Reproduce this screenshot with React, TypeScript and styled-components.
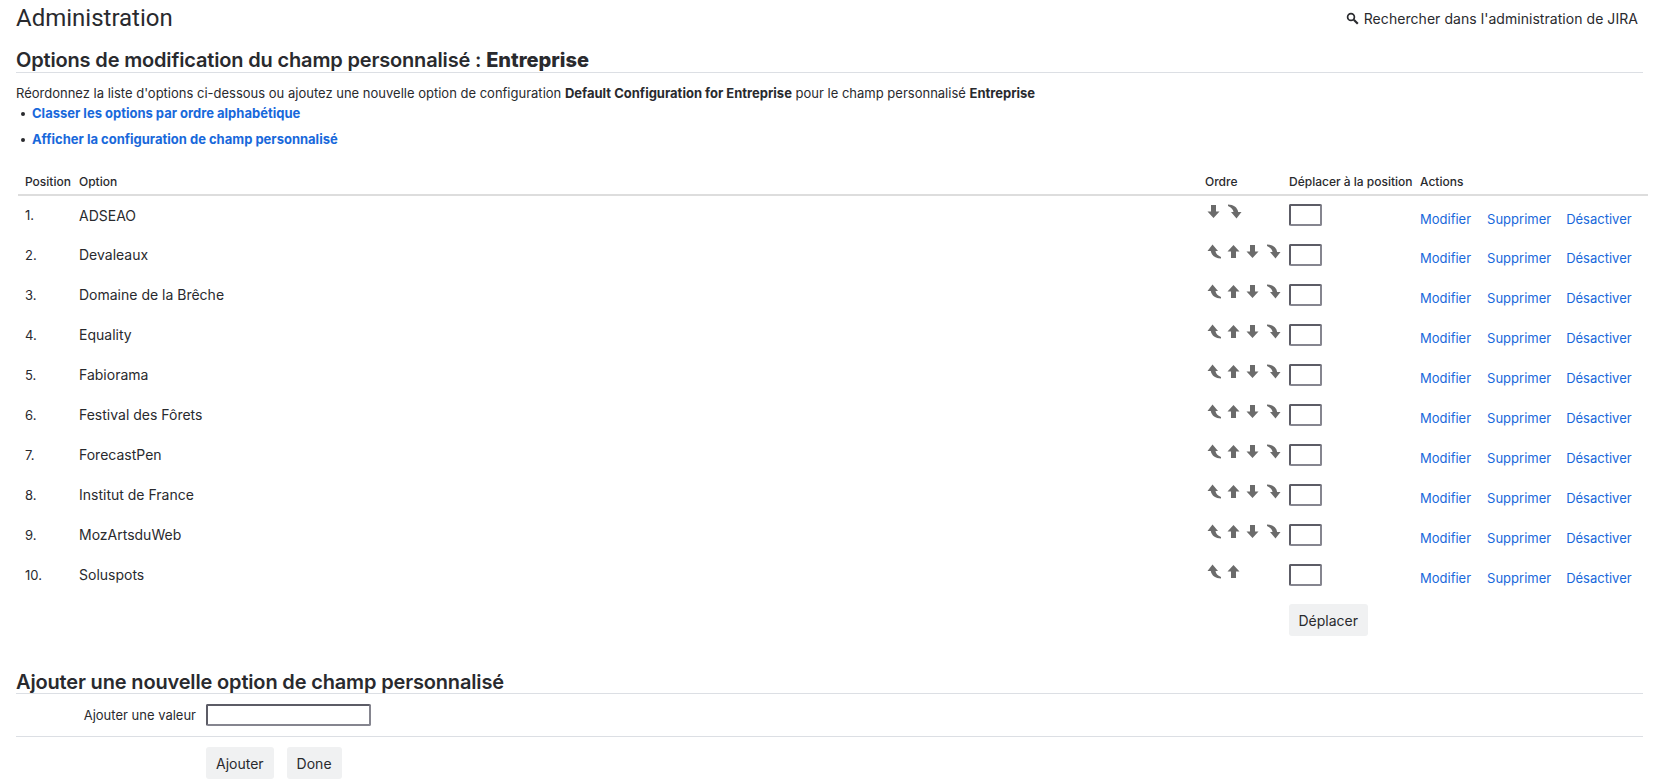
import React from "react";
import styled, { createGlobalStyle } from "styled-components";

const Global = createGlobalStyle`
  html, body { margin: 0; padding: 0; background: #fff; }
  body { font-family: Inter, "Liberation Sans", sans-serif; font-size: 14px; color: #292a2e; overflow: hidden; }
`;

const Page = styled.div`
  width: 1659px;
  height: 782px;
  padding: 0 16px;
  box-sizing: border-box;
  color: #292a2e;
`;
const TopBar = styled.header`
  display: flex;
  justify-content: space-between;
  align-items: center;
  height: 37px;
  padding-right: 5px;
`;
const PageTitle = styled.h1`
  margin: 0;
  font-family: Roboto, sans-serif;
  font-size: 24px;
  font-weight: 400;
  line-height: 37px;
  color: #292a2e;
`;
const AdminSearch = styled.div`
  display: flex;
  align-items: center;
  gap: 5px;
  font-size: 14px;
  letter-spacing: 0.05px;
`;
const SectionTitle = styled.h2`
  margin: 12px 0 0;
  padding-bottom: 0;
  font-size: 20px;
  line-height: 23px;
  font-weight: 600;
  letter-spacing: -0.008em;
  border-bottom: 1px solid #dcdfe4;
  strong { font-weight: 800; letter-spacing: 0; }
`;
const AddTitle = styled(SectionTitle)`
  margin: 0;
  line-height: 22px;
`;
const Intro = styled.p`
  margin: 12px 0 0;
  font-size: 13px;
  line-height: 17px;
  strong { font-weight: 700; }
`;
const LinkList = styled.ul`
  margin: -1px 0 16px;
  padding: 0 0 0 16px;
  list-style: none;
`;
const LinkItem = styled.li`
  position: relative;
  height: 25.5px;
  line-height: 25px;
  font-size: 13px;
  &::before {
    content: "";
    position: absolute;
    left: -11px;
    top: 11px;
    width: 4px;
    height: 4px;
    border-radius: 50%;
    background: #292a2e;
  }
`;
const BoldLink = styled.a`
  color: #1868db;
  font-weight: 700;
`;
const Table = styled.table`
  margin-left: 2px;
  width: 1630px;
  border-collapse: collapse;
  table-layout: fixed;
`;
const Head = styled.th<{ $w: number }>`
  width: ${p => p.$w}px;
  box-sizing: border-box;
  padding: 0 0 0 7px;
  height: 27px;
  text-align: left;
  font-size: 12px;
  font-weight: 550;
  border-bottom: 2px solid #dddddd;
  white-space: nowrap;
`;
const Row = styled.tr`
  height: 40px;
`;
const Cell = styled.td`
  padding: 0 0 1px 7px;
  font-size: 14px;
  vertical-align: middle;
`;
const NumCell = styled(Cell)`
  font-size: 13px;
`;
const OrderCell = styled.td`
  padding: 0 0 8px 9px;
  vertical-align: middle;
`;
const MoveCell = styled.td`
  padding: 0 0 1px 7px;
  vertical-align: middle;
`;
const ActionsCell = styled.td`
  padding: 6px 0 0 7px;
  font-size: 13px;
  vertical-align: middle;
  white-space: nowrap;
`;
const ArrowRow = styled.div`
  display: flex;
  gap: 4.6px;
  height: 15px;
`;
const ArrowIcon = styled.svg`
  width: 15px;
  height: 15px;
  display: block;
  fill: #6b6b6b;
`;
const PosInput = styled.input`
  display: block;
  width: 33px;
  height: 22px;
  box-sizing: border-box;
  border-style: solid;
  border-width: 2px;
  border-color: #5c5c66 #85858f #85858f #5c5c66;
  border-radius: 2px;
  padding: 0;
  background: #fff;
`;
const ActionLink = styled.a<{ $gap?: number }>`
  color: #1868db;
  margin-right: ${p => p.$gap ?? 0}px;
`;
const Button = styled.button`
  height: 32px;
  padding: 0 10px;
  border: 0;
  border-radius: 3px;
  background: #f0f1f2;
  color: #292a2e;
  font: 400 14px Inter, sans-serif;
`;
const MoveButton = styled(Button)`
  padding: 0 9.5px;
`;
const MoveRow = styled.div`
  padding: 9px 0 0 1289px;
  margin-left: -16px;
`;
const AddSection = styled.section`
  margin-top: 35px;
`;
const AddRow = styled.div`
  display: flex;
  align-items: center;
  height: 41px;
  border-bottom: 1px solid #dcdfe4;
  padding-bottom: 1px;
`;
const AddLabel = styled.label`
  width: 180px;
  text-align: right;
  font-size: 13px;
  margin-right: 10px;
`;
const AddInput = styled(PosInput)`
  width: 165px;
`;
const Buttons = styled.div`
  display: flex;
  gap: 13px;
  padding: 10px 0 0 190px;
`;

const Up = () => (
  <ArrowIcon viewBox="0 0 15 15"><path d="M6.5 1 12.5 7.5H9V14H4V7.5H.5z" /></ArrowIcon>
);
const Down = () => (
  <ArrowIcon viewBox="0 0 15 15"><path d="M6.500 14 .5 7.500H4V1h5v6.500h3.500z" /></ArrowIcon>
);
const First = () => (
  <ArrowIcon viewBox="0 0 15 15"><path d="M5.500.5 11 7H8.500C8.800 9.500 10.500 11.500 14 13V14.500C8.500 14.500 4.600 11.600 3.800 7H.5z" /></ArrowIcon>
);
const Last = () => (
  <ArrowIcon viewBox="0 0 15 15"><path d="M9.500 14.500 4 8H6.500C6.200 5.500 4.500 3.500 1 2V.5C6.500.5 10.400 3.400 11.200 8H14.500z" /></ArrowIcon>
);

const options = ["ADSEAO", "Devaleaux", "Domaine de la Brêche", "Equality", "Fabiorama", "Festival des Fôrets", "ForecastPen", "Institut de France", "MozArtsduWeb", "Soluspots"];

export default function App() {
  return (
    <Page>
      <Global />
      <TopBar>
        <PageTitle>Administration</PageTitle>
        <AdminSearch>
          <svg width="13" height="13" viewBox="0 0 13 13" fill="none" stroke="#292a2e">
            <circle cx="5" cy="5" r="3.4" strokeWidth="1.7" />
            <path d="M7.8 7.8 11.8 11.8" strokeWidth="2.2" />
          </svg>
          Rechercher dans l'administration de JIRA
        </AdminSearch>
      </TopBar>
      <SectionTitle>Options de modification du champ personnalisé : <strong>Entreprise</strong></SectionTitle>
      <Intro>Réordonnez la liste d'options ci-dessous ou ajoutez une nouvelle option de configuration <strong>Default Configuration for Entreprise</strong> pour le champ personnalisé <strong>Entreprise</strong></Intro>
      <LinkList>
        <LinkItem><BoldLink>Classer les options par ordre alphabétique</BoldLink></LinkItem>
        <LinkItem><BoldLink>Afficher la configuration de champ personnalisé</BoldLink></LinkItem>
      </LinkList>
      <Table>
        <thead>
          <tr>
            <Head $w={54}>Position</Head>
            <Head $w={1126}>Option</Head>
            <Head $w={84}>Ordre</Head>
            <Head $w={131}>Déplacer à la position</Head>
            <Head $w={235}>Actions</Head>
          </tr>
        </thead>
        <tbody>
          {options.map((o, i) => (
            <Row key={o}>
              <NumCell>{i + 1}.</NumCell>
              <Cell>{o}</Cell>
              <OrderCell>
                <ArrowRow>
                  {i > 0 && <First />}
                  {i > 0 && <Up />}
                  {i < options.length - 1 && <Down />}
                  {i < options.length - 1 && <Last />}
                </ArrowRow>
              </OrderCell>
              <MoveCell><PosInput /></MoveCell>
              <ActionsCell>
                <ActionLink $gap={16}>Modifier</ActionLink>
                <ActionLink $gap={15}>Supprimer</ActionLink>
                <ActionLink>Désactiver</ActionLink>
              </ActionsCell>
            </Row>
          ))}
        </tbody>
      </Table>
      <MoveRow><MoveButton>Déplacer</MoveButton></MoveRow>
      <AddSection>
        <AddTitle as="h3">Ajouter une nouvelle option de champ personnalisé</AddTitle>
        <AddRow>
          <AddLabel>Ajouter une valeur</AddLabel>
          <AddInput />
        </AddRow>
        <Buttons>
          <Button>Ajouter</Button>
          <Button>Done</Button>
        </Buttons>
      </AddSection>
    </Page>
  );
}
